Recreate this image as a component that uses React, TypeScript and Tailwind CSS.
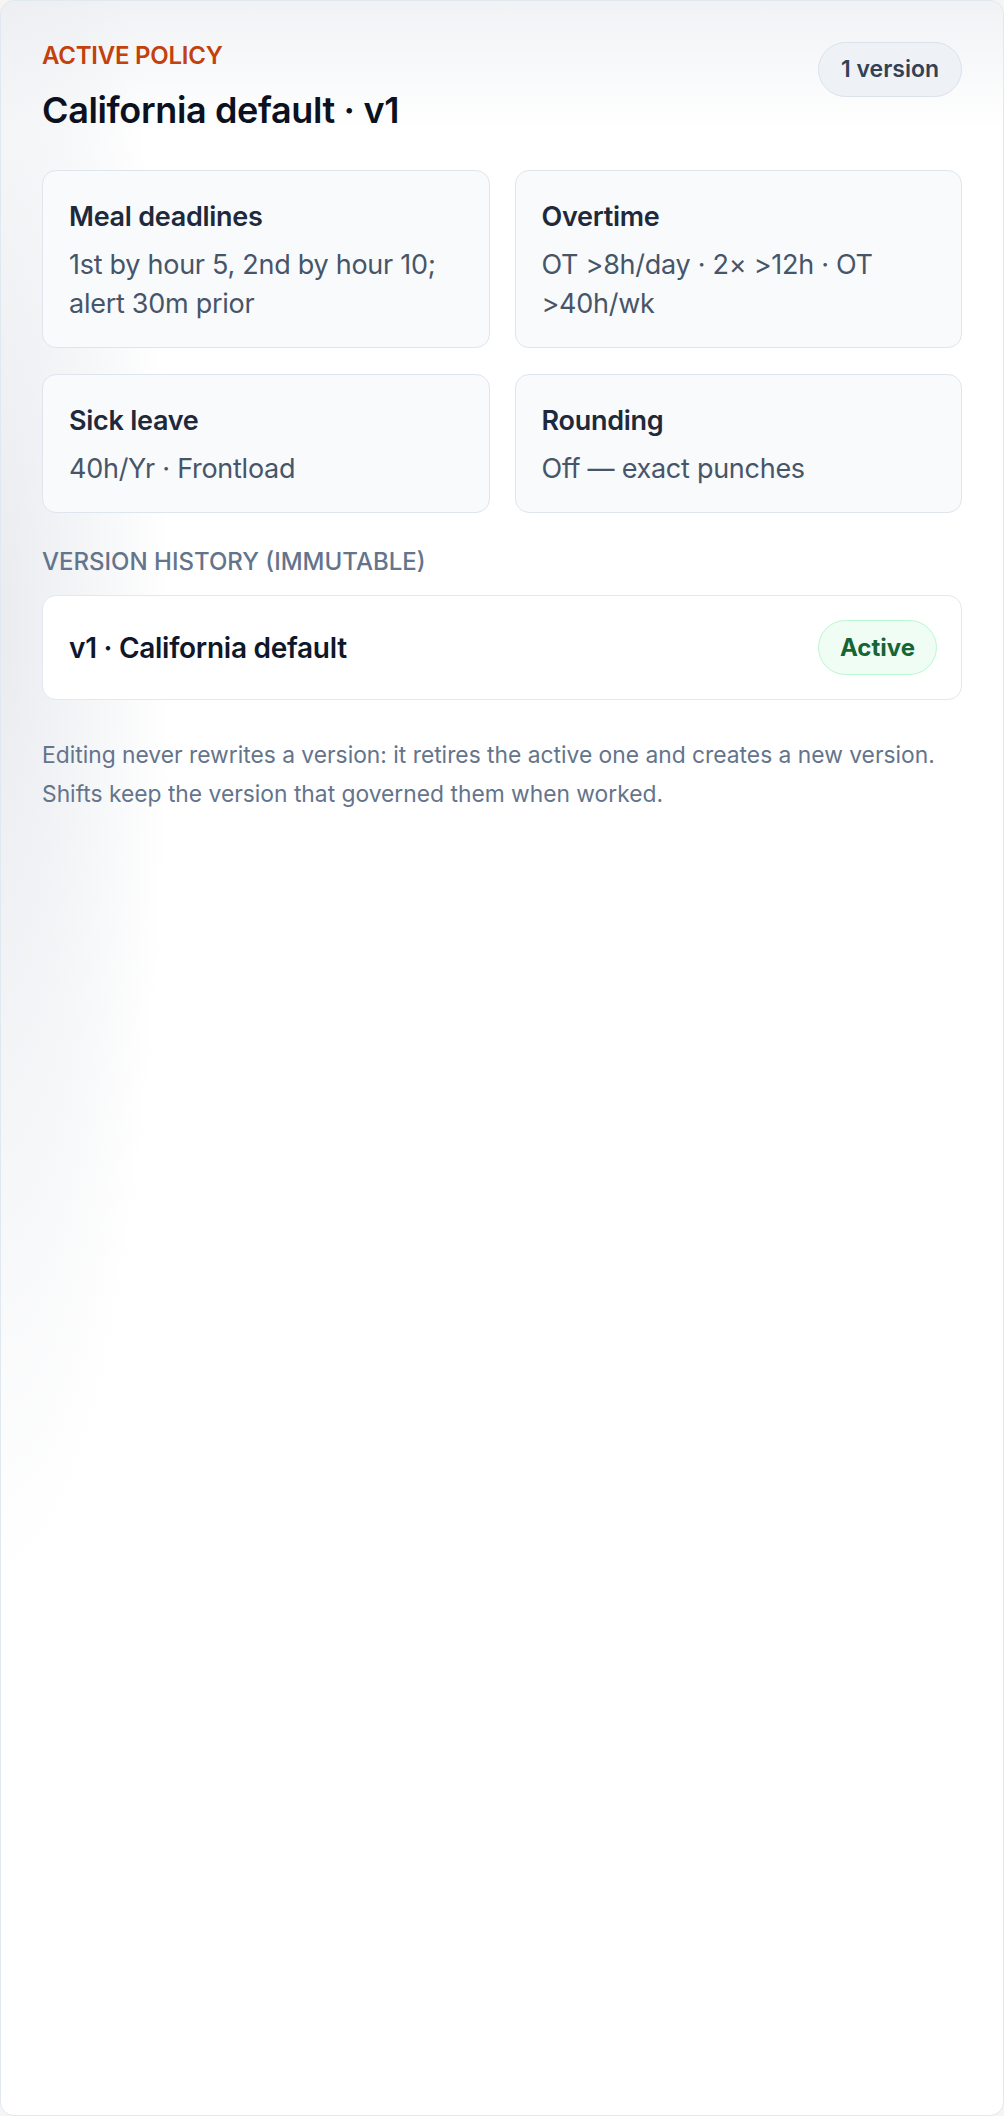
const rules = [
  { title: "Meal deadlines", body: "1st by hour 5, 2nd by hour 10; alert 30m prior" },
  { title: "Overtime", body: "OT >8h/day · 2× >12h · OT >40h/wk" },
  { title: "Sick leave", body: "40h/Yr · Frontload" },
  { title: "Rounding", body: "Off — exact punches" },
];

const versions = [{ id: "v1", name: "California default", active: true }];

export default function App() {
  return (
    <div className="min-h-screen bg-[#f7f5f3] font-['Inter',_'Noto_Sans',_sans-serif]">
      <div className="min-h-[2116px] rounded-[14px] border border-[#e2e8f0] bg-white bg-[image:radial-gradient(ellipse_170px_960px_at_0%_620px,rgba(228,231,236,0.8),rgba(255,255,255,0)),linear-gradient(to_bottom,rgba(238,240,243,0.85),rgba(255,255,255,0)_130px)] p-[41px]">
        <div className="flex items-start justify-between">
          <div>
            <p className="text-[24px] font-semibold uppercase leading-[28px] tracking-[-0.01em] text-[#c2410c]">
              Active policy
            </p>
            <h1 className="mt-[18px] text-[36px] font-semibold leading-[44px] tracking-[-0.01em] text-[#0b1120]">
              California default · v1
            </h1>
          </div>
          <span className="flex h-[55px] items-center rounded-full border border-[#dbe2ec] bg-[#eef2f7] px-[22px] text-[23px] font-semibold text-[#334155]">
            {versions.length} version
          </span>
        </div>

        <div className="mt-[38px] grid grid-cols-2 gap-x-[25px] gap-y-[26px]">
          {rules.map((r) => (
            <div
              key={r.title}
              className="rounded-[14px] border border-[#dfe5ee] bg-[#f8fafc] px-[26px] pb-[24px] pt-[26px]"
            >
              <h3 className="text-[27px] font-semibold leading-[40px] tracking-[-0.01em] text-[#1e293b]">
                {r.title}
              </h3>
              <p className="mt-2 text-[27px] leading-[39px] tracking-[-0.01em] text-[#475569]">
                {r.body}
              </p>
            </div>
          ))}
        </div>

        <p className="mt-[35px] text-[24px] font-medium uppercase leading-[28px] text-[#64748b]">
          Version history (immutable)
        </p>
        <div className="mt-[19px] flex flex-col gap-3">
          {versions.map((v) => (
            <div
              key={v.id}
              className="flex h-[105px] items-center justify-between rounded-[14px] border border-[#e2e8f0] bg-white pl-[26px] pr-[24px]"
            >
              <span className="text-[28px] font-semibold tracking-[-0.01em] text-[#0f172a]">
                {v.id} · {v.name}
              </span>
              {v.active && (
                <span className="flex h-[55px] items-center rounded-full border-[1.5px] border-[#bbf7d0] bg-[#effdf4] px-[21px] text-[24px] font-bold text-[#166534]">
                  Active
                </span>
              )}
            </div>
          ))}
        </div>

        <p className="mt-[35px] text-[22.8px] leading-[39px] text-[#64748b]">
          Editing never rewrites a version: it retires the active one and creates a new version.
          <br />
          Shifts keep the version that governed them when worked.
        </p>
      </div>
    </div>
  );
}
